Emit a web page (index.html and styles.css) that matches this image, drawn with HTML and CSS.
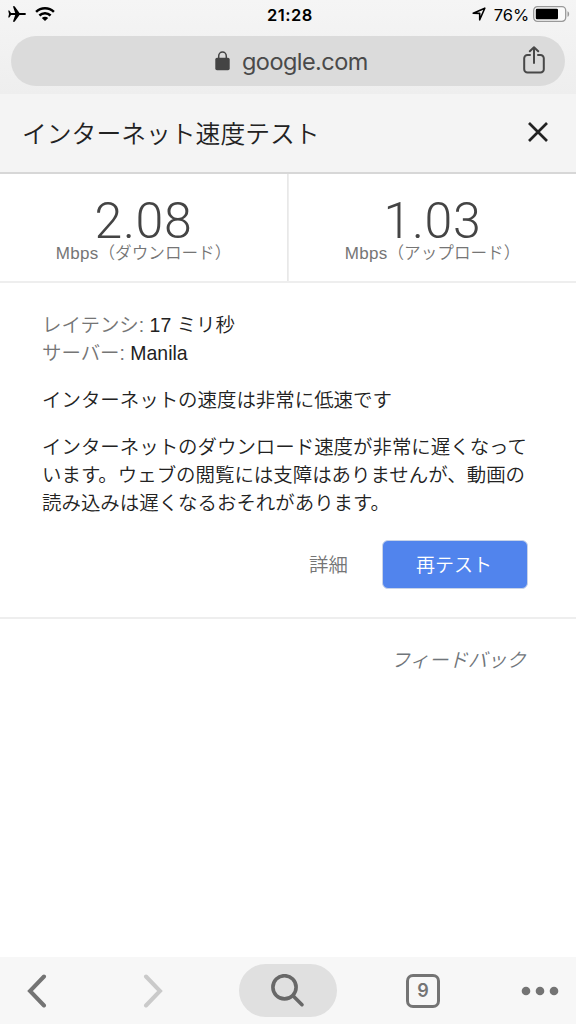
FILE: index.html
```html
<!DOCTYPE html>
<html lang="ja">
<head>
<meta charset="utf-8">
<title>インターネット速度テスト</title>
<link rel="stylesheet" href="styles.css">
</head>
<body>
<div class="screen">
  <header class="browser">
    <div class="status">
      <div class="status-left">
        <svg class="plane" width="18" height="16" viewBox="0 0 18 16"><path d="M18 8c0-.8-.8-1.100-1.800-1.100H11.500L6.600.2H4.900l2.300 6.700H3L1.300 4.500H.2L1 8 .2 11.500h1.100L3 9.100h4.200L4.900 15.800h1.700l4.900-6.700h4.700c1 0 1.800-.3 1.800-1.100z"/></svg>
        <svg class="wifi" width="20" height="14" viewBox="0 0 20 14"><g fill="none" stroke="#000" stroke-width="2.500"><path d="M1.100 4.900C6.100.1 13.900.1 18.900 4.900"/><path d="M4.400 8.500c3.200-3 8-3 11.200 0"/></g><path d="M6.800 11c1.800-1.600 4.600-1.600 6.400 0L10 14z"/></svg>
      </div>
      <span class="clock">21:28</span>
      <div class="status-right">
        <svg class="location" width="14" height="14" viewBox="0 0 14 14"><path d="M1.200 6.300 12.800 1.200 7.700 12.800V6.400z" fill="none" stroke="#000" stroke-width="1.600" stroke-linejoin="round"/></svg>
        <span class="percent">76%</span>
        <svg width="37" height="16" viewBox="0 0 37 16"><rect x=".7" y=".7" width="32" height="14.600" rx="3.700" fill="#fafafa" stroke="#999" stroke-width="1.300"/><rect x="2.800" y="2.800" width="22.200" height="10.400" rx="1.200"/><path d="M34.500 5.200c2.200.8 2.200 4.800 0 5.600z" fill="#999"/></svg>
      </div>
    </div>
    <div class="omnibox">
      <div class="address">
        <svg width="15" height="20" viewBox="0 0 15 20"><path d="M3.700 8V5.200a3.800 4.200 0 0 1 7.600 0V8" fill="none" stroke="#444" stroke-width="1.500"/><rect x=".3" y="6.700" width="14.400" height="12.600" rx="1.700" fill="#444"/></svg>
        <span>google.com</span>
      </div>
      <svg class="share" width="22" height="28" viewBox="0 0 22 28"><g fill="none" stroke="#484848" stroke-width="2" stroke-linecap="round" stroke-linejoin="round"><path d="M7 9H4.500A3.300 3.300 0 0 0 1.200 12.300v10.900a3.300 3.300 0 0 0 3.300 3.300h13a3.300 3.300 0 0 0 3.300-3.300V12.300A3.300 3.300 0 0 0 17.500 9H15"/><path d="M11 17V1.500M6.800 5.200 11 1.200l4.200 4"/></g></svg>
    </div>
  </header>
  <div class="titlebar">
    <h1>インターネット速度テスト</h1>
    <svg width="22" height="22" viewBox="0 0 22 22"><path d="M2 2 20 20M20 2 2 20" stroke="#222" stroke-width="2.700"/></svg>
  </div>
  <section class="speeds">
    <div class="speed"><strong>2.08</strong><span class="unit"><span>Mbps</span>（ダウンロード）</span></div>
    <div class="speed"><strong>1.03</strong><span class="unit"><span>Mbps</span>（アップロード）</span></div>
  </section>
  <main class="result">
    <p class="fact"><span>レイテンシ: </span>17 ミリ秒</p>
    <p class="fact"><span>サーバー: </span>Manila</p>
    <p class="summary">インターネットの速度は非常に低速です</p>
    <p class="detail">インターネットのダウンロード速度が非常に遅くなって<br>います。ウェブの閲覧には支障はありませんが、動画の<br>読み込みは遅くなるおそれがあります。</p>
    <div class="actions"><a class="more">詳細</a><button class="retest">再テスト</button></div>
  </main>
  <div class="feedback">フィードバック</div>
  <nav class="toolbar">
    <svg class="back" width="20" height="34" viewBox="0 0 20 34"><path d="M17 2.500 3 17l14 14.500" fill="none" stroke="#747474" stroke-width="4" stroke-linecap="round" stroke-linejoin="miter"/></svg>
    <svg class="forward" width="20" height="34" viewBox="0 0 20 34"><path d="m3 2.500 14 14.500L3 31.500" fill="none" stroke="#cacaca" stroke-width="4" stroke-linecap="round"/></svg>
    <div class="search"><svg width="34" height="34" viewBox="0 0 34 34"><g fill="none" stroke="#686868" stroke-width="3.600" stroke-linecap="round"><circle cx="13.500" cy="13.300" r="11.600"/><path d="m22 21.700 9 9"/></g></svg></div>
    <div class="tabs">9</div>
    <svg class="dots" width="38" height="10" viewBox="0 0 38 10" fill="#747474"><circle cx="5" cy="5" r="4.300"/><circle cx="19" cy="5" r="4.300"/><circle cx="33" cy="5" r="4.300"/></svg>
  </nav>
</div>
</body>
</html>
```
FILE: styles.css
```css
* { box-sizing: border-box; }
body { margin: 0; background: #fff; color: #222; font-family: "Liberation Sans", "Noto Sans CJK JP", sans-serif; }
h1, p { margin: 0; font-weight: 350; }
svg { display: block; flex: none; }
.screen { display: flex; flex-direction: column; width: 576px; height: 1024px; overflow: hidden; white-space: nowrap; }
.browser { height: 94px; flex: none; background: linear-gradient(#f5f5f5, #eee); }
.status { display: grid; grid-template-columns: 1fr auto 1fr; align-items: center; height: 28px; padding: 0 6px 0 8px; color: #000; }
.status-left, .status-right { display: flex; align-items: center; }
.wifi { margin-left: 9px; }
.clock { font: 600 16.500px Inter, sans-serif; padding: 1px 0 0 2px; letter-spacing: .5px; }
.status-right { justify-content: flex-end; }
.percent { font: 400 16.500px Inter, sans-serif; margin: 1px 4px 0 8px; letter-spacing: -.1px; }
.omnibox { display: flex; align-items: center; height: 50px; margin: 8px 11px 0; padding: 0 20px 0 204px; border-radius: 25px; background: #dbdbdb; }
.address { display: flex; align-items: center; gap: 12px; flex: 1; color: #4a4a4a; font: 400 23.500px/50px Inter, sans-serif; letter-spacing: -.55px; }
.address span { padding-top: 2px; }
.share { margin-bottom: 2px; }
.titlebar { display: flex; align-items: center; justify-content: space-between; flex: none; height: 80px; padding: 0 27px 2px 22px; background: #f4f4f4; border-bottom: 2px solid #d7d7d7; }
.titlebar h1 { font: 350 24.800px/40px "Noto Sans CJK JP", sans-serif; }
.speeds { display: grid; grid-template-columns: 1fr 1fr; flex: none; height: 109px; border-bottom: 2px solid #eee; }
.speed { display: flex; flex-direction: column; align-items: center; padding-top: 27px; }
.speed:first-child { border-right: 1px solid #e8e8e8; }
.speed + .speed { border-left: 1px solid #eee; }
.speed strong { color: #444; font: 300 50px/40px Roboto, sans-serif; letter-spacing: .7px; }
.unit { height: 20px; margin-top: 1px; color: #757575; font: 350 16.600px/20px "Noto Sans CJK JP", sans-serif; }
.unit span { font: 400 17px/20px "Liberation Sans", sans-serif; letter-spacing: .3px; }
.result { height: 336px; flex: none; padding: 28px 42px 0; border-bottom: 2px solid #eee; font-size: 19.450px; line-height: 28px; font-weight: 350; }
.fact span { color: #757575; }
.summary { margin-top: 19px; }
.detail { margin-top: 19px; }
.actions { display: flex; justify-content: flex-end; align-items: center; gap: 34px; margin: 23px 6px 0 0; }
.more { color: #757575; }
.retest { width: 146px; height: 49px; padding: 0 2px 2px 0; border: 1px solid #c8d3e8; border-radius: 6px; background: #5184ed; color: #fff; font: 350 19px "Noto Sans CJK JP", sans-serif; }
.feedback { padding: 26px 50px 0 0; text-align: right; color: #70757a; font: italic 350 19.400px/28px "Noto Sans CJK JP", sans-serif; }
.toolbar { display: flex; align-items: center; height: 67px; margin-top: auto; padding: 0 17px 0 27px; background: #f7f7f7; }
.forward { margin-left: 96px; }
.search { display: flex; align-items: center; justify-content: center; width: 98px; height: 53px; margin-left: 76px; border-radius: 27px; background: #e0e0e0; }
.tabs { width: 34px; height: 34px; margin-left: 69px; border: 3px solid #747474; border-radius: 7px; color: #747474; font: 600 18px/28px Inter, sans-serif; text-align: center; }
.dots { margin-left: auto; }
```
